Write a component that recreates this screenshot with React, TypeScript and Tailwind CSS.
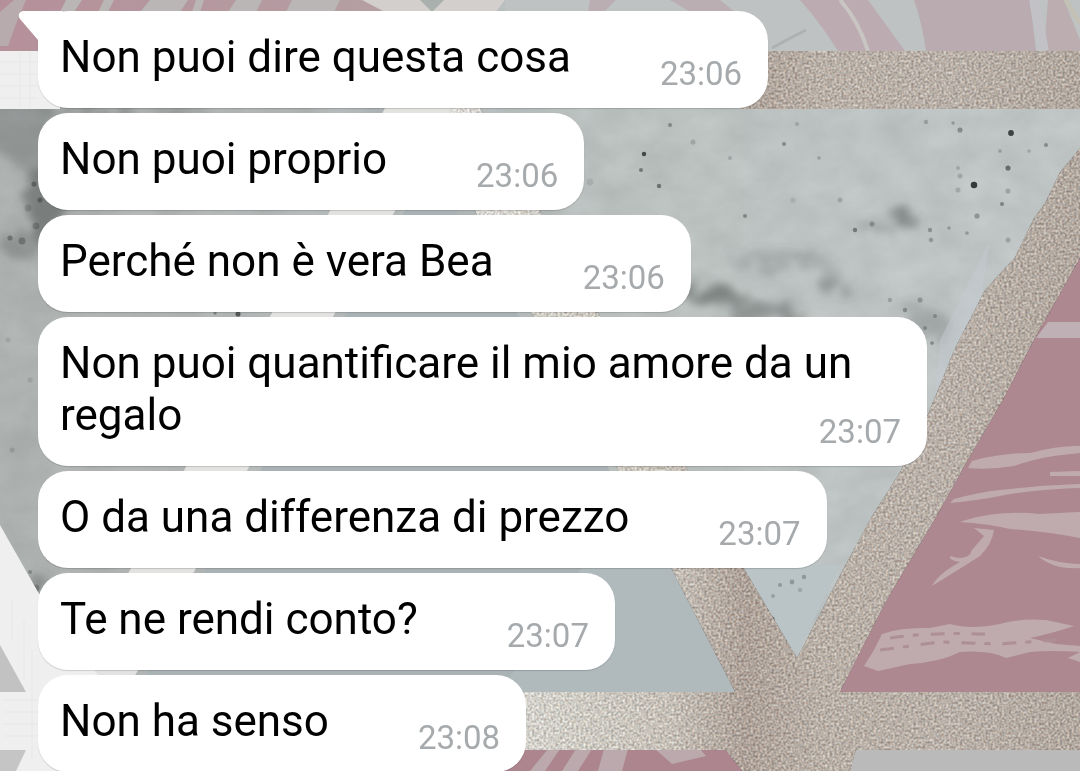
interface Message {
  id: number;
  text: string;
  time: string;
}

const messages: Message[] = [
  { id: 1, text: "Non puoi dire questa cosa", time: "23:06" },
  { id: 2, text: "Non puoi proprio", time: "23:06" },
  { id: 3, text: "Perché non è vera Bea", time: "23:06" },
  { id: 4, text: "Non puoi quantificare il mio amore da un regalo", time: "23:07" },
  { id: 5, text: "O da una differenza di prezzo", time: "23:07" },
  { id: 6, text: "Te ne rendi conto?", time: "23:07" },
  { id: 7, text: "Non ha senso", time: "23:08" },
];

// x, y, radius, opacity
const specks = [
  [1011, 133, 3.4, 0.9], [974, 185, 3.8, 0.95], [1008, 168, 3, 0.6], [644, 154, 2.6, 0.85],
  [641, 170, 2.4, 0.5], [659, 186, 2.6, 0.55], [670, 125, 2.4, 0.4], [693, 142, 3, 0.2],
  [784, 144, 2.4, 0.4], [819, 158, 2.2, 0.25], [745, 216, 2.4, 0.4], [855, 230, 2.6, 0.5],
  [797, 124, 2.4, 0.2], [926, 122, 2.6, 0.25], [960, 130, 3, 0.4], [953, 123, 2, 0.3],
  [1046, 145, 2.4, 0.4], [1000, 151, 2.2, 0.25], [1029, 151, 2.2, 0.2], [1008, 191, 3, 0.25],
  [1002, 204, 2.4, 0.45], [977, 216, 3, 0.35], [930, 230, 2.6, 0.35], [949, 228, 2, 0.3],
  [967, 233, 2.2, 0.3], [931, 240, 2.6, 0.3], [958, 190, 3, 0.2], [960, 176, 3, 0.2],
  [958, 168, 2.4, 0.2], [840, 200, 3, 0.2], [793, 200, 3, 0.12], [1008, 240, 3, 0.25],
  [872, 224, 3, 0.3], [730, 158, 2.4, 0.2], [590, 182, 4, 0.1], [920, 300, 3, 0.3],
  [905, 310, 2.6, 0.35], [935, 316, 2.4, 0.3], [890, 300, 2.6, 0.25], [925, 328, 2.4, 0.3],
  [932, 343, 2.2, 0.4], [944, 381, 2.4, 0.4], [937, 412, 2.4, 0.35], [772, 619, 3, 0.6],
  [780, 585, 2.4, 0.3], [792, 582, 2.8, 0.3], [804, 577, 2.6, 0.3], [773, 596, 2.4, 0.25],
  [800, 590, 2.6, 0.2], [34, 184, 3, 0.45], [40, 200, 3, 0.45], [10, 238, 3, 0.4],
  [22, 241, 4, 0.35], [36, 226, 4, 0.3], [28, 208, 4, 0.2], [36, 588, 4, 0.3],
  [30, 572, 2.4, 0.3], [30, 380, 3, 0.12], [8, 340, 3, 0.12], [12, 450, 3, 0.15],
  [238, 314, 3, 0.7], [215, 313, 2, 0.4],
];

function Wallpaper() {
  return (
    <svg
      className="absolute inset-0 h-full w-full"
      viewBox="0 0 1080 771"
      preserveAspectRatio="xMidYMid slice"
      aria-hidden="true"
    >
      <defs>
        <linearGradient id="concrete" x1="0" x2="1">
          <stop offset="0" stopColor="#adb1b0" />
          <stop offset="0.35" stopColor="#b1b6b6" />
          <stop offset="0.6" stopColor="#bac1bf" />
          <stop offset="1" stopColor="#bfc5c5" />
        </linearGradient>
        <linearGradient id="linen" gradientUnits="userSpaceOnUse" x1="0" y1="0" x2="1080" y2="0">
          <stop offset="0.4" stopColor="#dddcd9" />
          <stop offset="0.53" stopColor="#cfccc4" />
          <stop offset="0.62" stopColor="#c6c0b8" />
          <stop offset="0.69" stopColor="#aea299" />
          <stop offset="0.76" stopColor="#b9b0a7" />
          <stop offset="0.88" stopColor="#b9b0a8" />
          <stop offset="1" stopColor="#b2a89f" />
        </linearGradient>
        <linearGradient id="topPink" x1="0" x2="1">
          <stop offset="0" stopColor="#b5909a" />
          <stop offset="1" stopColor="#b5a0a4" />
        </linearGradient>
        {/* coarse grain for the glitter bands */}
        <filter id="glitter" x="0" y="0" width="1" height="1" colorInterpolationFilters="sRGB">
          <feTurbulence type="fractalNoise" baseFrequency="0.43" numOctaves="1" seed="4" result="t" />
          <feColorMatrix
            in="t"
            values="1.2 0.2 0 0 -0.2  1.2 0 0.2 0 -0.2  1.1 0 0.4 0 -0.25  0 0 0 0 1"
            result="n"
          />
          <feComposite in="SourceGraphic" in2="n" operator="arithmetic" k2="1" k3="0.42" k4="-0.21" result="m" />
          <feComposite in="m" in2="SourceAlpha" operator="in" />
        </filter>
        {/* slow clouding for the concrete */}
        <filter id="cloud" x="0" y="0" width="1" height="1" colorInterpolationFilters="sRGB">
          <feTurbulence type="fractalNoise" baseFrequency="0.025 0.035" numOctaves="4" seed="9" result="t" />
          <feColorMatrix in="t" values="1 0 0 0 0  1 0 0 0 0  1 0 0 0 0  0 0 0 0 1" result="n" />
          <feComposite in="SourceGraphic" in2="n" operator="arithmetic" k2="1" k3="0.08" k4="-0.04" result="m" />
          <feComposite in="m" in2="SourceAlpha" operator="in" />
        </filter>
        <filter id="stain" x="-0.5" y="-0.5" width="2" height="2">
          <feTurbulence type="fractalNoise" baseFrequency="0.06" numOctaves="4" seed="2" result="t" />
          <feDisplacementMap in="SourceGraphic" in2="t" scale="40" result="d" />
          <feGaussianBlur in="d" stdDeviation="4" />
        </filter>
      </defs>

      <rect width="1080" height="771" fill="url(#concrete)" filter="url(#cloud)" />

      {/* stains */}
      <g fill="#5f6462" filter="url(#stain)">
        <ellipse cx="22" cy="130" rx="34" ry="34" opacity="0.35" />
        <ellipse cx="46" cy="205" rx="18" ry="44" opacity="0.65" />
        <ellipse cx="20" cy="245" rx="22" ry="12" opacity="0.4" />
        <ellipse cx="120" cy="110" rx="90" ry="6" opacity="0.4" />
        <ellipse cx="718" cy="296" rx="32" ry="10" opacity="0.65" />
        <ellipse cx="764" cy="312" rx="40" ry="9" opacity="0.5" />
        <ellipse cx="830" cy="284" rx="12" ry="10" opacity="0.5" />
        <ellipse cx="780" cy="262" rx="60" ry="8" opacity="0.25" />
        <ellipse cx="900" cy="215" rx="14" ry="7" opacity="0.6" />
        <ellipse cx="875" cy="228" rx="18" ry="4" opacity="0.4" />
        <ellipse cx="925" cy="325" rx="26" ry="16" opacity="0.25" />
        <ellipse cx="40" cy="588" rx="10" ry="12" opacity="0.5" />
      </g>
      <path d="M990 240L975 340L935 400L940 340Z" fill="#c3c9cf" opacity="0.5" />

      {/* inner slate triangle */}
      <path d="M430 165L740 692H137Z" fill="#a9b2b5" />
      <path d="M600 540H672L735 692H500Z" fill="#b0b9bb" />
      <path d="M738 565H840L797 655Z" fill="#bac4c7" />

      <g fill="#2f3231">
        {specks.map(([x, y, r, o]) => (
          <circle key={`${x}-${y}`} cx={x} cy={y} r={r * 0.85} opacity={o} />
        ))}
      </g>

      {/* top strip */}
      <rect width="400" height="51" fill="url(#topPink)" />
      <g fill="#b9b6b5">
        <path d="M0 12L14 0H26L16 24L8 46H0Z" opacity="0.7" />
        <path d="M66 0H82L74 12H60ZM104 0H114L108 12H98ZM150 0H188L180 12H140ZM196 0H204L200 12H192ZM236 0H262L256 12H228ZM292 0H340L334 12H286Z" />
      </g>
      <path d="M505 0H1080V51H505Z" fill="#bec2c2" />
      <path d="M590 0H616L604 12H588ZM670 0H720L735 12H690Z" fill="#bbaeb3" />
      <path d="M800 0H868L905 51H838Q820 22 800 0Z" fill="#bcabb0" />
      <path d="M914 0H1030L1036 51H926Q922 22 914 0Z" fill="#b9abaf" />
      <path d="M1048 0H1064L1080 40V51H1044Z" fill="#bcadb1" />
      <g fill="none" stroke="#c9c5c3" strokeWidth="4">
        <path d="M840 0Q858 20 868 51" />
        <path d="M1034 0L1044 51" stroke="#c2c2c6" strokeWidth="10" />
        <path d="M1066 0L1080 24" stroke="#c3c1b5" strokeWidth="5" />
      </g>
      <path d="M772 48Q790 38 806 30" fill="none" stroke="#aeb1b1" strokeWidth="3" />

      {/* pink triangle with brushed streaks */}
      <path d="M1080 255L1060 290L1030 340L950 480L838 692H1080Z" fill="#ad8890" />
      <path d="M1048 322H1080V338H1036Z" fill="#beb0b4" />
      <g fill="#bfabad">
        <path d="M972 461Q1000 453 1030 453Q1060 445 1080 446V453Q1040 456 1014 466Q990 470 968 468Z" />
        <path d="M1050 472L1080 471V476L1050 476Z" />
        <path d="M954 499Q980 492 1000 490L1040 486L1080 484V488Q1030 490 1000 496Q980 500 950 503Z" />
        <path d="M966 520Q1000 510 1040 514L1080 512V538Q1050 532 1010 529Q990 524 960 522Z" />
        <path d="M974 528L994 530Q992 544 980 556Q958 570 932 586Q938 574 960 562Q948 560 950 556Q968 562 972 550L984 536Z" />
        <path d="M1038 556Q1060 564 1080 564V568Q1054 570 1038 556Z" />
        <path d="M882 634Q900 627 930 628L950 624Q970 630 1000 624Q1020 618 1046 620L1074 626Q1050 634 1030 638L1056 644L1080 646V652Q1050 650 1030 652L1006 658Q990 650 960 652Q940 662 910 664L878 671L864 666L874 650Z" />
        <path d="M1068 658L1080 652V662Z" />
      </g>
      <g fill="none" stroke="#ad8f95" strokeWidth="3" strokeDasharray="14 9 6 12">
        <path d="M890 638Q930 632 985 634" />
        <path d="M880 650L940 642L1000 644L1056 640" />
      </g>

      {/* bottom strip */}
      <rect x="480" y="749" width="270" height="22" fill="#ad858f" />
      <path d="M548 749H560L545 771H530ZM576 749H592L578 771H562ZM604 749H628L622 771H598ZM655 749H700L706 756L672 764Z" fill="#bba9ad" />
      <rect x="846" y="749" width="234" height="22" fill="#bababa" />

      {/* glitter bands */}
      <g fill="url(#linen)" filter="url(#glitter)">
        <path d="M740 51H1080V109H740Z" />
        <path d="M1080 148L1060 172L1045 203L1034 218L1015 257L985 290L955 348L928 414L900 472L872 516L840 575L797 658L745 570L685 465L540 211L480 108H415L475 211L615 465L672 570L735 692H480V750H725L742 771H850L856 750H1080V692H840L885 603L938 514L968 460L1003 400L1033 342L1065 285L1080 258Z" />
      </g>
      <path d="M362 0H505L494 14L480 51H420L385 12Z" fill="#d3cfcc" />
      <path d="M420 0H444L432 12Z" fill="#aab0ae" />

      {/* pale linen bands on the left */}
      <path
        d="M385 108H450L395 211L335 313L250 465L195 570L137 672L92 750H30L75 672L130 570L187 465L272 313L330 211Z"
        fill="#e2e2e0"
      />
      <g fill="#efefef">
        <path d="M0 51H60V109H0Z" />
        <path d="M0 525L38 592L110 692L60 771H0Z" />
      </g>
      <path d="M0 645L26 692H0Z" fill="#c2c2c2" />
      <path d="M0 750H26L16 771H0Z" fill="#c5c5c5" />
      <g fill="none" stroke="#e7e7e7" strokeWidth="1">
        <path d="M0 62H38M0 74H38M0 86H38M0 98H38M20 52V108M30 52V108" />
        <path d="M2 700H38M4 712H38M2 724H38M4 736H38M12 600V640M24 620V680M32 650V760" />
      </g>
    </svg>
  );
}

function BubbleTail() {
  return (
    <svg className="absolute top-0 -left-5 h-8 w-11" viewBox="0 0 44 32" aria-hidden="true">
      <path d="M6 0H44V32H20V29L2 8C-1 4 2 0 6 0Z" fill="#fff" />
    </svg>
  );
}

function Bubble({ message, first }: { message: Message; first: boolean }) {
  return (
    <li className="relative flow-root w-fit max-w-[889px] rounded-[30px] bg-white pt-5 pr-[26px] pb-3.5 pl-[22px] shadow-[0_1px_1px_rgba(0,0,0,0.15)]">
      {first && <BubbleTail />}
      <span className="relative text-[44px] leading-[52px] text-black">{message.text}</span>
      <time className="float-right mt-[23px] ml-[89px] text-[33px] leading-10 text-[#a6aaac]">
        {message.time}
      </time>
    </li>
  );
}

export default function App() {
  return (
    <main className="relative h-screen overflow-hidden bg-[#b5baba] font-['Roboto',sans-serif]">
      <Wallpaper />
      <ul className="relative flex flex-col gap-[5px] pt-[11px] pl-[38px]">
        {messages.map((message, i) => (
          <Bubble key={message.id} message={message} first={i === 0} />
        ))}
      </ul>
    </main>
  );
}
